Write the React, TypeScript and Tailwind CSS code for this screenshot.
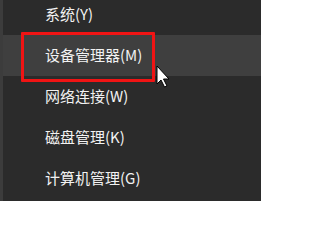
import React from "react";

const items = [
  { label: "系统(Y)", hover: false },
  { label: "设备管理器(M)", hover: true },
  { label: "网络连接(W)", hover: false },
  { label: "磁盘管理(K)", hover: false },
  { label: "计算机管理(G)", hover: false },
];

export default function App() {
  return (
    <div
      className="relative w-[261px] h-[201px] overflow-hidden bg-[#2b2b2b] flex"
      style={{ fontFamily: '"Microsoft YaHei", "Noto Sans CJK SC", "Noto Sans", sans-serif' }}
    >
      <div className="w-[3px] h-full bg-[#3c3c3c] shrink-0" />
      <div className="flex-1 flex flex-col -mt-[6px]">
        {items.map((it) => (
          <div
            key={it.label}
            className={`h-[41px] shrink-0 flex items-center pl-[42px] text-[15px] text-[#f2f2f2] ${
              it.hover ? "bg-[#3f3f3f]" : ""
            }`}
          >
            {it.label}
          </div>
        ))}
      </div>
      <div className="absolute left-[21px] top-[32px] w-[134px] h-[50px] border-[3px] border-[#f01414] rounded-[1px]" />
      <svg
        className="absolute left-[156px] top-[65px]"
        width="16"
        height="24"
        viewBox="0 0 16 24"
      >
        <path
          d="M1 1 L1 19 L5 15 L8.5 22 L11 21 L7.5 14 L13 14 Z"
          fill="#ffffff"
          stroke="#000000"
          strokeWidth="1"
          strokeLinejoin="miter"
        />
      </svg>
    </div>
  );
}
